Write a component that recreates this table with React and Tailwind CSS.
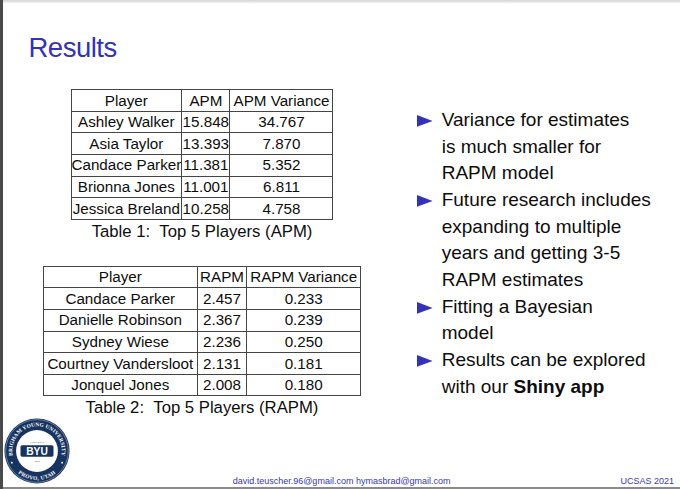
import React from "react";

const apm = [
  ["Ashley Walker", "15.848", "34.767"],
  ["Asia Taylor", "13.393", "7.870"],
  ["Candace Parker", "11.381", "5.352"],
  ["Brionna Jones", "11.001", "6.811"],
  ["Jessica Breland", "10.258", "4.758"],
];

const rapm = [
  ["Candace Parker", "2.457", "0.233"],
  ["Danielle Robinson", "2.367", "0.239"],
  ["Sydney Wiese", "2.236", "0.250"],
  ["Courtney Vandersloot", "2.131", "0.181"],
  ["Jonquel Jones", "2.008", "0.180"],
];

const cell = "border border-[#454545] p-0 h-[21.6px] leading-[20px] text-center font-normal whitespace-nowrap";

const StatsTable = ({ head, rows, widths, width }) => (
  <table className="table-fixed border-collapse text-[15.2px] text-[#0d0d0d]" style={{ width }}>
    <colgroup>
      {widths.map((w, i) => (
        <col key={i} style={{ width: w }} />
      ))}
    </colgroup>
    <thead>
      <tr>
        {head.map((h) => (
          <th key={h} className={cell}>{h}</th>
        ))}
      </tr>
    </thead>
    <tbody>
      {rows.map((r) => (
        <tr key={r[0]}>
          {r.map((v, i) => (
            <td key={i} className={cell}>{v}</td>
          ))}
        </tr>
      ))}
    </tbody>
  </table>
);

// little right-pointing beamer triangle
const Bullet = () => (
  <svg width="16" height="12" viewBox="0 0 16 12" className="mt-[8px] shrink-0">
    <path d="M0 0 L15.6 5.9 L0 11.7 Z" fill="#3333b3" />
  </svg>
);

const ByuSeal = () => (
  <svg width="66" height="66" viewBox="0 0 64 64" className="shrink-0">
    <defs>
      <path id="sealTop" d="M11.2 44 A24 24 0 1 1 52.8 44" />
      <path id="sealBottom" d="M5.3 40.5 A28 28 0 0 0 58.7 40.5" />
    </defs>
    <circle cx="32" cy="32" r="31.6" fill="#17335f" />
    <circle cx="32" cy="32" r="30.4" fill="none" stroke="#fff" strokeWidth="0.35" />
    <circle cx="32" cy="32" r="20.3" fill="#fff" />
    <text fill="#fff" fontSize="5.3" fontWeight="bold" fontFamily="'Liberation Serif', serif" letterSpacing="0.1">
      <textPath href="#sealTop" startOffset="50%" textAnchor="middle">BRIGHAM YOUNG UNIVERSITY</textPath>
    </text>
    <text fill="#fff" fontSize="5.3" fontWeight="bold" fontFamily="'Liberation Serif', serif" letterSpacing="0.3">
      <textPath href="#sealBottom" startOffset="50%" textAnchor="middle">PROVO, UTAH</textPath>
    </text>
    <circle cx="7.6" cy="43.3" r="0.9" fill="#fff" />
    <circle cx="56.4" cy="43.3" r="0.9" fill="#fff" />
    <text x="32" y="24" fill="#17335f" fontSize="2.8" textAnchor="middle" fontFamily="'Liberation Serif', serif">FOUNDED</text>
    <rect x="16" y="26.5" width="32" height="11" rx="1.6" fill="#17335f" />
    <text x="32" y="35.8" fill="#fff" fontSize="10" fontWeight="bold" textAnchor="middle" fontFamily="'Liberation Sans', sans-serif">BYU</text>
    <text x="32" y="43" fill="#17335f" fontSize="2.8" textAnchor="middle" fontFamily="'Liberation Serif', serif">1875</text>
  </svg>
);

export default function App() {
  return (
    <div className="w-[680px] h-[489px] bg-white overflow-hidden flex flex-col border-l-[3px] border-[#4a4a4a] font-['Liberation_Sans',Arial,sans-serif]">
      <div className="h-[3px] bg-gradient-to-b from-[#d4d4d4] to-[#f3f3f3]" />

      <h1 className="mt-[32px] ml-[25.5px] text-[27.5px] leading-[26px] tracking-[-0.5px] text-[#3333b3]">Results</h1>

      <div className="flex mt-[28.3px]">
        <div className="ml-[26px] w-[346px] flex flex-col items-center">
          <StatsTable
            head={["Player", "APM", "APM Variance"]}
            rows={apm}
            widths={[110.7, 48.3, 103]}
            width={262}
          />
          <p className="mt-[2px] text-[16.7px] leading-[20px] text-[#0d0d0d]">Table 1: &nbsp;Top 5 Players (APM)</p>

          <div className="mt-[24px]">
            <StatsTable
              head={["Player", "RAPM", "RAPM Variance"]}
              rows={rapm}
              widths={[154, 49.4, 114]}
              width={317.4}
            />
          </div>
          <p className="mt-[1.5px] text-[16.7px] leading-[20px] text-[#0d0d0d]">Table 2: &nbsp;Top 5 Players (RAPM)</p>
        </div>

        <ul className="ml-[41.7px] pt-[17.5px] text-[19px] leading-[26.7px] text-[#0d0d0d]">
          <li className="flex">
            <Bullet />
            <span className="ml-[9px]">Variance for estimates<br />is much smaller for<br />RAPM model</span>
          </li>
          <li className="flex">
            <Bullet />
            <span className="ml-[9px]">Future research includes<br />expanding to multiple<br />years and getting 3-5<br />RAPM estimates</span>
          </li>
          <li className="flex">
            <Bullet />
            <span className="ml-[9px]">Fitting a Bayesian<br />model</span>
          </li>
          <li className="flex">
            <Bullet />
            <span className="ml-[9px]">Results can be explored<br />with our <b className="font-bold">Shiny app</b></span>
          </li>
        </ul>
      </div>

      <footer className="mt-auto flex items-end">
        <div className="ml-[0.7px] mb-[2.7px]">
          <ByuSeal />
        </div>
        <span className="ml-[163px] text-[9px] leading-[11px] text-[#3939a8]">
          david.teuscher.96@gmail.com hymasbrad@gmail.com
        </span>
        <span className="ml-auto mr-[6px] text-[9px] leading-[11px] text-[#3939a8]">UCSAS 2021</span>
      </footer>
      <div className="h-[2px] bg-[#8a8a8a]" />
    </div>
  );
}
